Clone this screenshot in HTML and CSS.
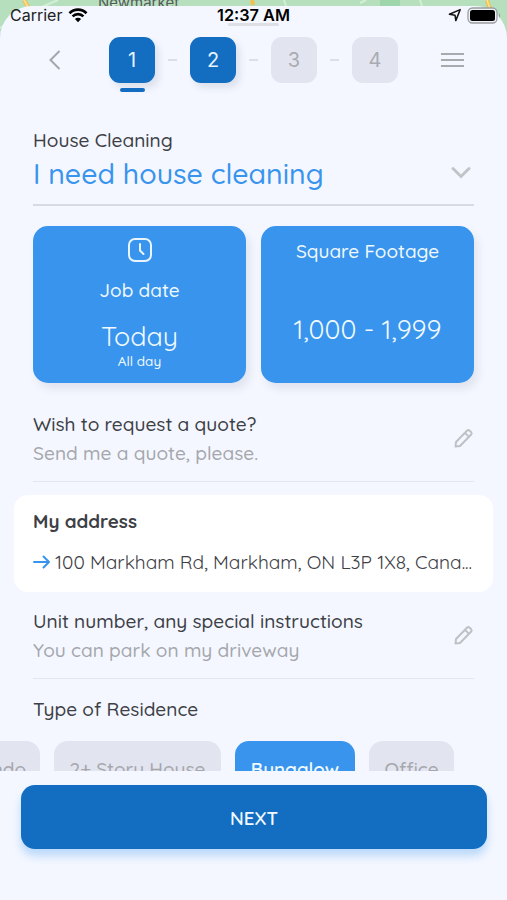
FILE: index.html
```html
<!DOCTYPE html>
<html lang="en">
<head>
  <meta charset="UTF-8">
  <meta name="viewport" content="width=device-width, initial-scale=1.0">
  <title>House Cleaning</title>
  <link rel="stylesheet" href="styles.css">
</head>
<body>
  <div class="screen">
    <div class="map">
      <svg width="507" height="60" viewBox="0 0 507 60">
        <rect width="507" height="60" fill="#b5dfbd"/>
        <path d="M58 0L30 12L0 28M110 6L126 0M284 0L286 6M360 3L366 0M420 0L422 6" fill="none" stroke="#d5eed8" stroke-width="2"/>
        <path d="M380 0h20v6h-20z" fill="#9fd5aa"/>
        <path d="M24 0L31 12M487 0L491 12M252 0L253 5" fill="none" stroke="#f3bf4d" stroke-width="4"/>
        <path d="M24 0L31 12M487 0L491 12" fill="none" stroke="#fbe29a" stroke-width="1.5"/>
      </svg>
      <span class="town">Newmarket</span>
    </div>

    <div class="status">
      <span class="carrier">Carrier</span>
      <svg class="wifi" width="20" height="15" viewBox="0 0 20 15">
        <path d="M1.5 5.2a12 12 0 0 1 17 0M4.6 8.4a7.6 7.6 0 0 1 10.8 0" fill="none" stroke="#000" stroke-width="2.7"/>
        <path d="M10 14.2L6.9 11a4.4 4.4 0 0 1 6.2 0z" fill="#000"/>
      </svg>
      <span class="clock">12:37 AM</span>
      <svg class="location" width="14" height="14" viewBox="0 0 14 14">
        <path d="M12.2 1.6L1.4 6.3L7 7.2L7.8 12.6z" fill="none" stroke="#111" stroke-width="1.5" stroke-linejoin="round"/>
      </svg>
      <svg class="battery" width="34" height="17" viewBox="0 0 34 17">
        <rect x="1" y="1" width="29" height="15" rx="4.5" fill="#eef1f5" stroke="#9a9da0" stroke-width="1.3"/>
        <rect x="3" y="3" width="25" height="11" rx="2.5" fill="#000"/>
        <path d="M32 6q2.4 2.5 0 5z" fill="#9a9da0"/>
      </svg>
    </div>

    <div class="sheet">
      <div class="grabber"></div>
      <div class="header">
        <svg class="back" width="14" height="22" viewBox="0 0 14 22">
          <path d="M11.5 2L2.5 11L11.5 20" fill="none" stroke="#a5a6aa" stroke-width="2"/>
        </svg>
        <div class="steps">
          <div class="step active current">1</div>
          <div class="dash"></div>
          <div class="step active">2</div>
          <div class="dash"></div>
          <div class="step">3</div>
          <div class="dash"></div>
          <div class="step">4</div>
        </div>
        <div class="menu"><i></i><i></i><i></i></div>
      </div>

      <div class="content">
        <div class="service">
          <div class="label">House Cleaning</div>
          <div class="service-row">
            <span class="service-name">I need house cleaning</span>
            <svg width="20" height="14" viewBox="0 0 20 14">
              <path d="M2 2.5L10 10.5L18 2.5" fill="none" stroke="#c3c4c7" stroke-width="3" stroke-linecap="round"/>
            </svg>
          </div>
        </div>

        <div class="cards">
          <div class="card">
            <svg width="26" height="26" viewBox="0 0 26 26">
              <rect x="2" y="2" width="22" height="22" rx="6" fill="none" stroke="#e8f5ff" stroke-width="2"/>
              <path d="M13 7v6.5l3.5 3.5" fill="none" stroke="#e8f5ff" stroke-width="2" stroke-linecap="round"/>
            </svg>
            <span class="card-label">Job date</span>
            <span class="card-value">Today</span>
            <span class="card-note">All day</span>
          </div>
          <div class="card footage">
            <span class="card-label">Square Footage</span>
            <span class="card-value">1,000 - 1,999</span>
          </div>
        </div>

        <div class="field">
          <div>
            <div class="label">Wish to request a quote?</div>
            <div class="hint">Send me a quote, please.</div>
          </div>
          <svg width="22" height="22" viewBox="0 0 22 22">
            <path d="M3.5 19.5L4 15L15.2 3.5q1.1-1 2.2 0l1.8 1.8q1 1.1 0 2.2L8 19zM13 5.9l4 4" fill="none" stroke="#c0c1c4" stroke-width="2" stroke-linejoin="round"/>
          </svg>
        </div>

        <div class="address">
          <div class="address-title">My address</div>
          <div class="address-row">
            <svg width="18" height="14" viewBox="0 0 18 14">
              <path d="M1 7h15M10.5 1.5L16 7l-5.5 5.5" fill="none" stroke="#3894ed" stroke-width="2" stroke-linecap="round" stroke-linejoin="round"/>
            </svg>
            <span class="address-text">100 Markham Rd, Markham, ON L3P 1X8, Cana...</span>
          </div>
        </div>

        <div class="field unit">
          <div>
            <div class="label">Unit number, any special instructions</div>
            <div class="hint">You can park on my driveway</div>
          </div>
          <svg width="22" height="22" viewBox="0 0 22 22">
            <path d="M3.5 19.5L4 15L15.2 3.5q1.1-1 2.2 0l1.8 1.8q1 1.1 0 2.2L8 19zM13 5.9l4 4" fill="none" stroke="#c0c1c4" stroke-width="2" stroke-linejoin="round"/>
          </svg>
        </div>

        <div class="label residence">Type of Residence</div>
        <div class="chips">
          <div class="chip condo">Condo</div>
          <div class="chip story">2+ Story House</div>
          <div class="chip bungalow selected">Bungalow</div>
          <div class="chip office">Office</div>
        </div>
      </div>

      <div class="footer">
        <button class="next">NEXT</button>
      </div>
    </div>
  </div>
</body>
</html>
```

FILE: styles.css
```css
* {
  box-sizing: border-box;
}
body {
  margin: 0;
  font-family: Quicksand, Lato, sans-serif;
  font-weight: 500;
  color: #3d4045;
}
.screen {
  position: relative;
  width: 507px;
  height: 900px;
  overflow: hidden;
  padding-top: 6px;
}
.map {
  position: absolute;
  top: 0;
  left: 0;
}
.map svg {
  display: block;
}
.town {
  position: absolute;
  top: -7px;
  left: 98px;
  font: 15px/20px Inter, sans-serif;
  color: #555b5a;
}

/* iOS status bar, floats above the sheet */
.status {
  position: absolute;
  z-index: 2;
  top: 5px;
  left: 0;
  width: 507px;
  height: 20px;
  padding: 0 6px 0 10px;
  display: grid;
  grid-template-columns: 58px 149px 1fr 19px 34px;
  align-items: center;
  font-family: Inter, sans-serif;
  font-size: 16px;
  line-height: 20px;
  color: #222;
}
.carrier {
  font-weight: 400;
}
.clock {
  font-size: 16.3px;
  font-weight: 600;
  color: #000;
}

.sheet {
  position: relative;
  height: 894px;
  background: #f4f7ff;
  border-radius: 32px 32px 0 0;
  display: flex;
  flex-direction: column;
}
.grabber {
  position: absolute;
  top: 17px;
  left: 228px;
  width: 51px;
  height: 3px;
  border-radius: 2px;
  background: #dddfe5;
}
.header {
  display: flex;
  align-items: center;
  justify-content: space-between;
  height: 46px;
  margin: 31px 43px 0 48px;
}
.steps {
  display: flex;
  align-items: center;
  margin-left: 4px;
}
.step {
  position: relative;
  width: 46px;
  height: 46px;
  border-radius: 11px;
  background: #e2e5f0;
  color: #a9abb2;
  font-family: Inter, sans-serif;
  font-size: 20px;
  font-weight: 400;
  line-height: 47px;
  text-align: center;
}
.step.active {
  background: #136dc1;
  color: #e4f3ff;
  box-shadow: 4px 5px 7px rgba(60, 70, 100, 0.12);
}
.step.current::after {
  content: "";
  position: absolute;
  left: 11px;
  bottom: -9px;
  width: 25px;
  height: 4px;
  border-radius: 2px;
  background: #136dc1;
}
.dash {
  width: 9px;
  height: 2px;
  margin: 0 13px;
  background: #dcdfe7;
}
.menu {
  display: flex;
  flex-direction: column;
  gap: 4px;
}
.menu i {
  width: 23px;
  height: 2px;
  background: #a9aaae;
}

.content {
  height: 688px;
  padding: 44px 33px 0;
  overflow: hidden;
}
.label, .hint, .address-title {
  height: 26px;
  font-size: 19.1px;
  line-height: 26px;
  white-space: nowrap;
}
.hint {
  margin-top: 3px;
  color: #a5a7ac;
}
.service {
  height: 79px;
  border-bottom: 2px solid #d7dae3;
}
.service-row {
  display: flex;
  align-items: center;
  justify-content: space-between;
  height: 36px;
  padding-right: 3px;
  margin-top: 2px;
}
.service-name {
  font-size: 28.5px;
  line-height: 36px;
  color: #3894ed;
}

.cards {
  display: grid;
  grid-template-columns: 213px 213px;
  gap: 15px;
  margin-top: 20px;
}
.card {
  height: 157px;
  padding-top: 11px;
  display: flex;
  flex-direction: column;
  align-items: center;
  border-radius: 15px;
  background: #3894ed;
  color: #f0f9ff;
  box-shadow: 4px 6px 8px rgba(60, 70, 100, 0.1);
}
.card-label {
  font-size: 19px;
  line-height: 26px;
  margin-top: 14px;
}
.card-value {
  font-size: 26.8px;
  font-weight: 450;
  line-height: 34px;
  margin-top: 16px;
}
.card-note {
  font-size: 13.5px;
  line-height: 16px;
}
.footage .card-label {
  margin-top: 1px;
}
.footage .card-value {
  margin-top: 48px;
}

.field {
  display: flex;
  justify-content: space-between;
  height: 71px;
  margin-top: 28px;
  border-bottom: 1px solid #e2e6ee;
}
.field svg {
  margin-top: 16px;
}
.address {
  height: 97px;
  margin: 13px -19px 0;
  padding: 13px 19px 0;
  border-radius: 14px;
  background: #fff;
}
.address-title {
  font-size: 18.8px;
  font-weight: 700;
}
.address-row {
  display: flex;
  align-items: center;
  gap: 4px;
  height: 26px;
  margin-top: 15px;
}
.address-text {
  font-size: 19.1px;
  font-weight: 450;
  white-space: nowrap;
}
.unit {
  margin-top: 16px;
}
.residence {
  margin-top: 17px;
}
.chips {
  display: flex;
  gap: 14px;
  margin: 19px 0 0 -85px;
}
.chip {
  flex: none;
  height: 56px;
  border-radius: 14px;
  background: #e2e4ef;
  color: #a5a7ad;
  font-size: 19px;
  line-height: 57px;
  text-align: center;
  white-space: nowrap;
}
.chip.selected {
  background: #3894ed;
  color: #f0f9ff;
  font-size: 18.8px;
  font-weight: 600;
}
.condo {
  width: 92px;
  padding-left: 6px;
}
.story {
  width: 167px;
}
.bungalow {
  width: 120px;
}
.office {
  width: 85px;
}

.footer {
  padding: 14px 20px 0 21px;
}
.next {
  display: block;
  width: 466px;
  height: 64px;
  border: none;
  border-radius: 14px;
  background: #136dc1;
  color: #f0f9ff;
  font: 600 18.8px/64px Quicksand, Lato, sans-serif;
  box-shadow: 0 7px 8px rgba(56, 148, 237, 0.3);
}
```
